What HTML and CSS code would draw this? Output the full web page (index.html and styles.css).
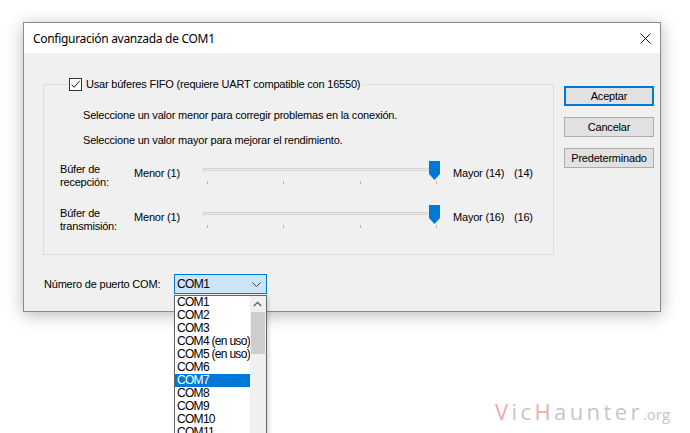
FILE: index.html
```html
<!DOCTYPE html>
<html lang="es">
<head>
<meta charset="utf-8">
<title>Configuración avanzada de COM1</title>
<link rel="stylesheet" href="styles.css">
</head>
<body>
<div class="stage">
  <div class="dialog">
    <div class="titlebar">
      <span class="title">Configuración avanzada de COM1</span>
      <svg class="close" width="11" height="11" viewBox="0 0 11 11"><path d="M0.5 0.5 L10.5 10.5 M10.5 0.5 L0.5 10.5" stroke="#111" stroke-width="1" fill="none"/></svg>
    </div>
    <div class="content">
      <div class="main">
        <div class="group">
          <div class="legend">
            <span class="check"><svg width="11" height="11" viewBox="0 0 11 11"><path d="M1.5 5.5 L4.2 8.3 L9.6 1.8" stroke="#222" stroke-width="1" fill="none"/></svg></span>
            <span class="legend-text">Usar búferes FIFO (requiere UART compatible con 16550)</span>
          </div>
          <p class="hint first">Seleccione un valor menor para corregir problemas en la conexión.</p>
          <p class="hint">Seleccione un valor mayor para mejorar el rendimiento.</p>
          <div class="slider-row">
            <div class="row-label">Búfer de<br>recepción:</div>
            <div class="min">Menor (1)</div>
            <div class="slider">
              <div class="track"></div>
              <div class="ticks"><i></i><i></i><i></i><i></i></div>
              <svg class="thumb" width="11" height="19" viewBox="0 0 11 19"><path d="M0 0 H11 V13 L5.5 19 L0 13 Z" fill="#0078d7"/></svg>
            </div>
            <div class="max">Mayor (14)</div>
            <div class="val">(14)</div>
          </div>
          <div class="slider-row second">
            <div class="row-label">Búfer de<br>transmisión:</div>
            <div class="min">Menor (1)</div>
            <div class="slider">
              <div class="track"></div>
              <div class="ticks"><i></i><i></i><i></i><i></i></div>
              <svg class="thumb" width="11" height="19" viewBox="0 0 11 19"><path d="M0 0 H11 V13 L5.5 19 L0 13 Z" fill="#0078d7"/></svg>
            </div>
            <div class="max">Mayor (16)</div>
            <div class="val">(16)</div>
          </div>
        </div>
        <div class="port-row">
          <span class="port-label">Número de puerto COM:</span>
          <div class="combo">
            <span class="combo-text">COM1</span>
            <svg class="chev" width="9" height="5" viewBox="0 0 9 5"><path d="M0.5 0.5 L4.5 4.5 L8.5 0.5" stroke="#444" stroke-width="1" fill="none"/></svg>
            <div class="dropdown">
              <ul class="items">
                <li>COM1</li>
                <li>COM2</li>
                <li>COM3</li>
                <li>COM4 (en uso)</li>
                <li>COM5 (en uso)</li>
                <li>COM6</li>
                <li class="sel">COM7</li>
                <li>COM8</li>
                <li>COM9</li>
                <li>COM10</li>
                <li>COM11</li>
              </ul>
              <div class="scrollbar">
                <div class="arrow"><svg width="9" height="6" viewBox="0 0 9 6"><path d="M0.8 5 L4.5 1.3 L8.2 5" stroke="#555" stroke-width="1.3" fill="none"/></svg></div>
                <div class="sthumb"></div>
              </div>
            </div>
          </div>
        </div>
      </div>
      <div class="buttons">
        <div class="btn default">Aceptar</div>
        <div class="btn">Cancelar</div>
        <div class="btn">Predeterminado</div>
      </div>
    </div>
  </div>
  <div class="watermark"><span class="pink">V</span><span class="grey">ic</span><span class="pink">H</span><span class="grey">aunter</span><span class="org">.org</span></div>
</div>
</body>
</html>
```

FILE: styles.css
```css
* { box-sizing: border-box; }
html, body { margin: 0; padding: 0; background: #fff; }
body { width: 690px; height: 433px; overflow: hidden; font-family: "Liberation Sans", Arial, sans-serif; font-size: 11px; letter-spacing: -0.2px; color: #000; }
.stage { position: relative; width: 690px; height: 433px; padding: 22px 0 0 23px; }

.dialog {
  width: 638px; height: 290px;
  border: 1px solid #8a8a8a;
  background: #f0f0f0;
  box-shadow: 0 3px 16px rgba(0,0,0,0.28);
  display: flex; flex-direction: column;
}
.titlebar {
  height: 30px; background: #fff;
  display: flex; align-items: center; justify-content: space-between;
  padding: 0 9px 0 9px;
}
.title { font-family: "Noto Sans", "Open Sans", sans-serif; font-size: 12px; color: #000; letter-spacing: -0.3px; }

.content { flex: 1; display: flex; padding: 0 5px 0 19px; gap: 10px; }
.main { width: 511px; padding-top: 31px; }

.group {
  height: 171px;
  border: 1px solid #dcdcdc;
}
.legend {
  display: flex; align-items: center; gap: 4px;
  width: fit-content;
  margin: -8px 0 0 24px; padding: 0 4px 0 1px;
  background: #f0f0f0; height: 14px;
}
.check {
  width: 13px; height: 13px; border: 1px solid #333; background: #fff;
  display: flex; align-items: center; justify-content: center;
}
.legend-text { line-height: 13px; }

.hint { margin: 12px 0 0 39px; line-height: 13px; }
.hint.first { margin-top: 18px; }

.slider-row { display: flex; height: 24px; margin-top: 14px; }
.slider-row.second { margin-top: 20px; }
.row-label { width: 74px; margin-left: 16px; margin-top: 2px; line-height: 13px; }
.min { width: 68px; margin-top: 6px; line-height: 13px; }
.slider { position: relative; width: 238px; height: 24px; }
.track {
  position: absolute; left: 0; right: 0; top: 7px; height: 3px;
  border-top: 1px solid #d6d6d6; border-bottom: 1px solid #d6d6d6; background: #e7e7e7;
}
.ticks { display: flex; justify-content: space-between; padding: 20px 3px 0 5px; }
.ticks i { display: block; width: 1px; height: 3px; background: #b4b4b4; }
.thumb { position: absolute; right: 0; top: 0; }
.max { width: 61px; margin-left: 13px; margin-top: 6px; line-height: 13px; }
.val { margin-top: 6px; line-height: 13px; }

.port-row { display: flex; align-items: center; margin-top: 19px; padding-left: 1px; }
.port-label { width: 130px; line-height: 13px; }
.combo {
  position: relative;
  width: 93px; height: 20px;
  border: 1px solid #0078d7; background: #cce4f7;
  display: flex; align-items: center; justify-content: space-between;
  padding: 0 5px 0 2px;
}
.combo-text { font-size: 12px; letter-spacing: -0.6px; }
.dropdown {
  position: absolute; left: -1px; top: 20px;
  width: 93px; height: 150px;
  border: 1px solid #646464; background: #fff;
  display: flex;
  box-shadow: 2px 2px 4px rgba(0,0,0,0.15);
}
.items { list-style: none; margin: 0; padding: 0; flex: 1; }
.items li { height: 13px; line-height: 13px; font-size: 12px; letter-spacing: -0.7px; padding-left: 2px; white-space: nowrap; overflow: hidden; }
.items li.sel { background: #0078d7; color: #fff; }
.scrollbar { width: 17px; background: #f0f0f0; display: flex; flex-direction: column; align-items: center; }
.arrow { height: 16px; display: flex; align-items: center; justify-content: center; }
.sthumb { width: 14px; height: 42px; background: #cdcdcd; margin-left: 1px; }

.buttons { width: 90px; padding-top: 33px; display: flex; flex-direction: column; gap: 11px; }
.btn {
  height: 20px; border: 1px solid #adadad; background: #e1e1e1;
  display: flex; align-items: center; justify-content: center;
  line-height: 13px;
}
.btn.default { border: 2px solid #0078d7; }

.watermark {
  position: absolute; left: 495px; top: 398px;
  font-family: "Open Sans", sans-serif; font-size: 22px; letter-spacing: 3.4px;
  line-height: 26px;
}
.pink { color: #efaaaa; }
.grey { color: #c6c6c6; }
.org { color: #c6c6c6; font-size: 15px; letter-spacing: 0; }
```
